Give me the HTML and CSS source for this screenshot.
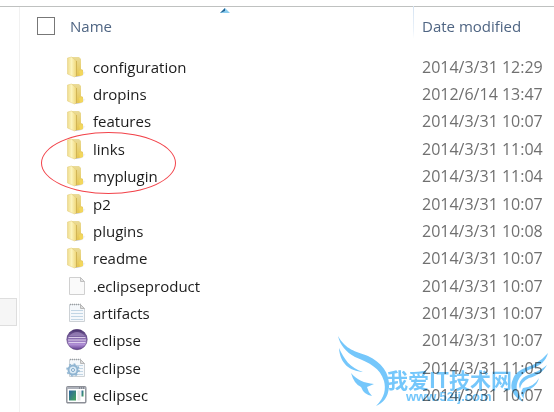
FILE: index.html
```
<!DOCTYPE html>
<html lang="en">
<head>
<meta charset="utf-8">
<title>eclipse</title>
<link rel="stylesheet" href="styles.css">
</head>
<body>
<svg class="defs" aria-hidden="true">
  <defs>
    <linearGradient id="gFold" x1="0" x2="1"><stop offset="0" stop-color="#efdc8c"/><stop offset=".45" stop-color="#fcf4bd"/><stop offset="1" stop-color="#eed574"/></linearGradient>
    <linearGradient id="gBack" x1="0" x2="0" y1="0" y2="1"><stop offset="0" stop-color="#eadb98"/><stop offset="1" stop-color="#e6c650"/></linearGradient>
    <linearGradient id="gShade" x1="0" x2="1"><stop offset="0" stop-color="#a9a9a9"/><stop offset="1" stop-color="#fff"/></linearGradient>
    <linearGradient id="gBall" x1="0" x2="0" y1="0" y2="1"><stop offset="0" stop-color="#46306a"/><stop offset=".35" stop-color="#7b62a0"/><stop offset=".75" stop-color="#b08fd6"/><stop offset="1" stop-color="#5f3c8c"/></linearGradient>
    <linearGradient id="gApp" x1="0" x2="1" y1="0" y2="1"><stop offset="0" stop-color="#2b62a0"/><stop offset="1" stop-color="#45a65a"/></linearGradient>
    <symbol id="folder" viewBox="0 0 22 22">
      <path d="M12 15l8 1-4 4-7 1z" fill="url(#gShade)"/>
      <path d="M5 1h8l2 2v10l2 1v4l-4 2H9z" fill="url(#gBack)"/>
      <path d="M1.500 2l4-1 5 4v15l-2 1-7-3z" fill="url(#gFold)" stroke="#e3cb76" stroke-width=".5"/>
      <path d="M10.500 5v15" stroke="#c7a947" stroke-width=".7"/>
      <path d="M13 15l2-1 2 2v3l-3 1z" fill="#f3d75c"/>
    </symbol>
    <symbol id="page" viewBox="0 0 22 22">
      <path d="M3.500 2.500h11l4 4v13h-15z" fill="#fafafa" stroke="#d0d0d0"/>
      <path d="M14.500 2.500v4h4z" fill="#e5e5e5" stroke="#c0c0c0"/>
    </symbol>
    <symbol id="note" viewBox="0 0 22 22">
      <path d="M3.500 2.500h11l4 4v13h-15z" fill="#f5f8fb" stroke="#ccd1d5"/>
      <path d="M4 2.500h11" stroke="#9a9ea2" stroke-width="1.500" stroke-dasharray="1 1"/>
      <path d="M14.500 2.500v4h4z" fill="#ddd" stroke="#b8b8b8"/>
      <path d="M5 8.500h12M5 11.500h12M5 14.500h12M5 17.500h12" stroke="#c2d6e5"/>
    </symbol>
    <symbol id="ball" viewBox="0 0 22 22">
      <circle cx="11" cy="10.500" r="10.200" fill="url(#gBall)" stroke="#4c3370" stroke-width=".6"/>
      <path d="M3 7q8-8 16 0" fill="#a893c4" opacity=".6"/>
      <path d="M2.500 8.500h17M2 11h18M2.500 13.500h17" stroke="#e4d8f1" stroke-width=".9"/>
    </symbol>
    <symbol id="config" viewBox="0 0 22 22">
      <use href="#note"/>
      <circle cx="7" cy="13" r="4.500" fill="#dcebf6" stroke="#8fb4d1" stroke-width="2"/>
      <circle cx="7" cy="13" r="6" fill="none" stroke="#8fb4d1" stroke-width="1.500" stroke-dasharray="2 2.700"/>
      <circle cx="7" cy="13" r="1.500" fill="#fff" stroke="#7ba6c9"/>
    </symbol>
    <symbol id="app" viewBox="0 0 22 22">
      <rect x=".8" y="2.800" width="19" height="16" rx="1" fill="#fff" stroke="#8b8e96" stroke-width="1.400"/>
      <path d="M1 4h18.500" stroke="#aeb2bb" stroke-width="2"/>
      <path d="M13 4h5" stroke="#60646c" stroke-dasharray="1 1"/>
      <rect x="3" y="6.500" width="7" height="10" fill="url(#gApp)"/>
      <rect x="11.500" y="6.500" width="3" height="10" fill="#e6e6e6"/>
      <rect x="15.500" y="6.500" width="2" height="6" fill="url(#gApp)"/>
    </symbol>
  </defs>
</svg>
<div class="window">
  <aside class="sidebar"><button class="side-item" type="button" aria-label="Selected folder"></button></aside>
  <main class="content">
    <table class="files">
      <thead>
        <tr>
          <th class="name-head" scope="col">
            <span class="cell"><input class="check" type="checkbox" aria-label="Select all">Name</span>
            <svg class="sort" viewBox="0 0 10 5" aria-hidden="true"><path d="M0 5L5 0l5 5z" fill="#8bcdf0"/><path d="M0 5L5 0v3z" fill="#22608f"/></svg>
          </th>
          <th class="date-head" scope="col">Date modified</th>
        </tr>
      </thead>
      <tbody>
        <tr><td><span class="cell item"><svg class="icon"><use href="#folder"/></svg>configuration</span></td><td class="date">2014/3/31 12:29</td></tr>
        <tr><td><span class="cell item"><svg class="icon"><use href="#folder"/></svg>dropins</span></td><td class="date">2012/6/14 13:47</td></tr>
        <tr><td><span class="cell item"><svg class="icon"><use href="#folder"/></svg>features</span></td><td class="date">2014/3/31 10:07</td></tr>
        <tr><td><span class="cell item"><svg class="icon"><use href="#folder"/></svg>links</span></td><td class="date">2014/3/31 11:04</td></tr>
        <tr><td><span class="cell item"><svg class="icon"><use href="#folder"/></svg>myplugin</span></td><td class="date">2014/3/31 11:04</td></tr>
        <tr><td><span class="cell item"><svg class="icon"><use href="#folder"/></svg>p2</span></td><td class="date">2014/3/31 10:07</td></tr>
        <tr><td><span class="cell item"><svg class="icon"><use href="#folder"/></svg>plugins</span></td><td class="date">2014/3/31 10:08</td></tr>
        <tr><td><span class="cell item"><svg class="icon"><use href="#folder"/></svg>readme</span></td><td class="date">2014/3/31 10:07</td></tr>
        <tr><td><span class="cell item"><svg class="icon"><use href="#page"/></svg>.eclipseproduct</span></td><td class="date">2014/3/31 10:07</td></tr>
        <tr><td><span class="cell item"><svg class="icon"><use href="#note"/></svg>artifacts</span></td><td class="date">2014/3/31 10:07</td></tr>
        <tr><td><span class="cell item"><svg class="icon"><use href="#ball"/></svg>eclipse</span></td><td class="date">2014/3/31 10:07</td></tr>
        <tr><td><span class="cell item"><svg class="icon"><use href="#config"/></svg>eclipse</span></td><td class="date">2014/3/31 11:05</td></tr>
        <tr><td><span class="cell item"><svg class="icon"><use href="#app"/></svg>eclipsec</span></td><td class="date">2014/3/31 10:07</td></tr>
      </tbody>
    </table>
    <div class="ring"></div>
    <svg class="watermark" viewBox="334 332 220 80">
      <path d="M338 336C346 350 355 351 368 356C381 362 390 373 389 387C388 398 383 403 376 406C385 397 386 389 384 381C380 368 370 363 355 357C346 352 340 345 338 336z"/>
      <path d="M339 348C344 359 350 368 363 372C350 371 340 364 339 348z"/>
      <path d="M351 373C357 380 364 383 374 384L367 387Q368 392 372 396Q364 395 361 387Q354 384 351 373z"/>
      <path d="M548 353C546 361 540 366 531 369C520 373 514 384 518 393L523 402C512 396 509 387 513 379C517 368 529 368 536 363Q543 359 548 353z"/>
      <path d="M547 365C543 372 537 376 529 378Q521 382 520 389C517 382 523 376 531 374Q540 371 547 365z"/>
      <path d="M539 378C537 386 531 389 526 391Q523 394 524 399Q519 394 523 388Q534 387 539 378z"/>
      <text class="mark-title" x="387" y="388">我爱IT技术网</text>
      <text class="mark-url" x="406" y="401">www.52ij.com</text>
    </svg>
  </main>
</div>
</body>
</html>
```
FILE: styles.css
```
* { box-sizing: border-box; }
body {
  margin: 0;
  background: #fff;
  color: #1c1c1c;
  font-family: "Open Sans", "Noto Sans", sans-serif;
  font-size: 15px;
}
.defs { position: absolute; width: 0; height: 0; }
.window {
  display: flex;
  min-height: 100vh;
  padding-top: 6px;
}
.window::before {
  content: "";
  position: absolute;
  top: 6px;
  left: 0;
  right: 0;
  height: 1px;
  background: #bfc1c0;
}
.sidebar {
  flex: 0 0 20px;
  padding: 292px 2px 0 0;
  border-right: 1px solid #f1f1f1;
}
.side-item {
  display: block;
  width: 100%;
  height: 28px;
  padding: 0;
  border: 1px solid #dedede;
  border-left: 0;
  background: #f6f6f6;
}
.content { position: relative; flex: 1; min-width: 0; }
.files {
  width: 100%;
  height: 403px;
  border-collapse: collapse;
  table-layout: fixed;
}
th, td { padding: 0; line-height: 24px; text-align: left; white-space: nowrap; }
thead tr { height: 47px; }
th { font-weight: 400; color: #4f6583; vertical-align: top; padding-top: 8px; }
.name-head { position: relative; }
.date-head {
  width: 141px;
  padding-left: 9px;
  background: linear-gradient(#d5e3f2, #e9f1f9 70%, #fff) no-repeat 0 0 / 1px 33px;
}
.cell { display: flex; align-items: center; }
.check {
  appearance: none;
  width: 18px;
  height: 18px;
  margin: 0 15px 0 17px;
  border: 1px solid #777;
  background: #fff;
}
.sort { position: absolute; top: 2px; left: 200px; width: 10px; height: 5px; }
.item { gap: 5px; padding-left: 46px; }
.icon { flex: none; width: 22px; height: 22px; }
.date { padding-left: 9px; color: #707070; font-size: 16px; }
.ring {
  position: absolute;
  left: 21px;
  top: 126px;
  width: 135px;
  height: 62px;
  border: 1px solid #f2434a;
  border-radius: 50%;
}
.watermark {
  position: absolute;
  right: 0;
  top: 326px;
  width: 220px;
  height: 80px;
  fill: #75c7fb;
  mix-blend-mode: multiply;
  pointer-events: none;
}
.mark-title { font: 700 21px "Noto Sans CJK SC", sans-serif; }
.mark-url { font: 700 13px "Liberation Sans", sans-serif; }
```
